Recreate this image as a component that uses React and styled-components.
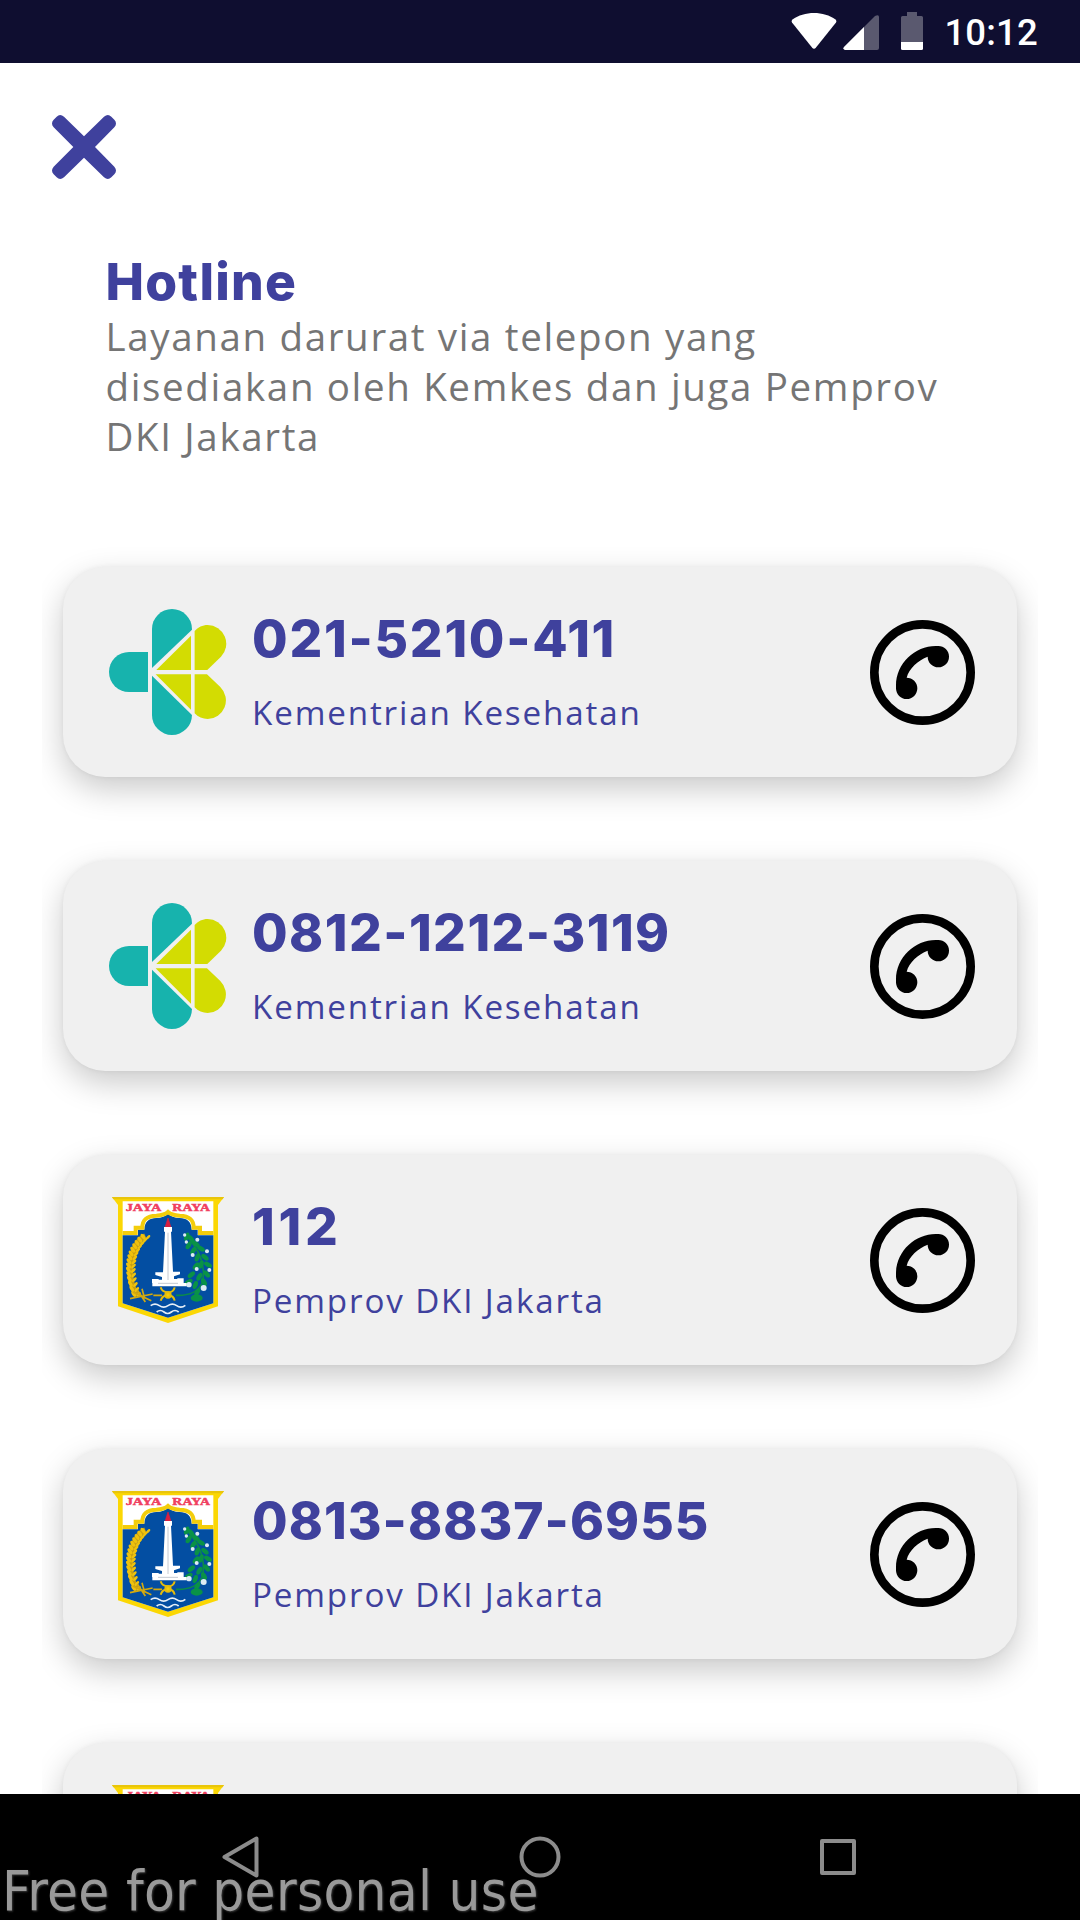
import React from "react";
import styled, { createGlobalStyle } from "styled-components";

const GlobalStyle = createGlobalStyle`
  * { box-sizing: border-box; }
  body { margin: 0; background: #fff; }
`;

const INDIGO = "#3f419d";

const Screen = styled.div`
  position: relative;
  display: flex;
  flex-direction: column;
  width: 1080px;
  height: 1920px;
  overflow: hidden;
  background: #fff;
`;

const StatusBar = styled.header`
  flex: none;
  display: flex;
  justify-content: flex-end;
  height: 63px;
  padding: 12px 42px 0 0;
  background: #0f0e30;
`;

const StatusIcon = styled.svg`
  flex: none;
  width: ${(p) => p.$w}px;
  height: 38px;
  margin-right: ${(p) => p.$gap}px;
`;

const Clock = styled.span`
  font: 500 36.5px/42px Roboto, sans-serif;
  letter-spacing: 0.2px;
  color: #fff;
`;

const Body = styled.main`
  flex: 1;
  min-height: 0;
  overflow: hidden;
  padding: 52px 42px 0;
`;

const CloseButton = styled.button`
  display: block;
  width: 84px;
  height: 64px;
  margin-left: 10px;
  padding: 0;
  border: 0;
  background: none;
  svg { display: block; }
`;

const Intro = styled.section`
  padding: 71.5px 30px 0 63.5px;
`;

const Title = styled.h1`
  margin: 0;
  font: 800 51.5px/60px Inter, sans-serif;
  letter-spacing: 1.2px;
  color: ${INDIGO};
`;

const Description = styled.p`
  margin: 0;
  font: 400 38.5px/50px "Open Sans", sans-serif;
  letter-spacing: 1.65px;
  white-space: pre-line;
  color: #757575;
`;

const List = styled.ul`
  display: flex;
  flex-direction: column;
  gap: 84px;
  height: 1300px;
  margin: 66.5px 0 0;
  padding: 40px 21px;
  list-style: none;
  overflow: hidden;
`;

const Card = styled.li`
  flex: none;
  display: flex;
  align-items: center;
  height: 210px;
  padding: 0 42px;
  border-radius: 42px;
  background: #f0f0f0;
  box-shadow: 0 12px 32px rgba(0, 0, 0, 0.21), 0 0 5px rgba(0, 0, 0, 0.05);
`;

const LogoBox = styled.div`
  flex: none;
  display: flex;
  justify-content: center;
  width: 126px;
  height: 126px;
  margin-right: 21px;
`;

const Contact = styled.div`
  flex: 1;
  display: flex;
  flex-direction: column;
  gap: 24px;
  color: ${INDIGO};
`;

const Phone = styled.strong`
  font: 800 51.5px/58px Inter, sans-serif;
  letter-spacing: ${(p) => p.$track}px;
`;

const Agency = styled.span`
  font: 400 33.2px/44px "Open Sans", sans-serif;
  letter-spacing: 1.85px;
`;

const NavBar = styled.nav`
  flex: none;
  display: flex;
  align-items: center;
  justify-content: center;
  gap: 256px;
  height: 126px;
  background: #000;
`;

const NavIcon = styled.svg`
  width: 42px;
  height: 42px;
  fill: none;
  stroke: #8c8c8c;
  stroke-width: 4;
  stroke-linejoin: round;
`;

const Watermark = styled.div`
  position: absolute;
  left: 2px;
  bottom: -4px;
  font: 400 56px/66px "DejaVu Sans Condensed", "DejaVu Sans", sans-serif;
  font-stretch: condensed;
  letter-spacing: 0.3px;
  white-space: nowrap;
  color: #999;
  text-shadow: 1px 1px 2px rgba(110, 110, 110, 0.5);
`;

const HealthLogo = () => (
  <svg width="117.3" height="126" viewBox="207 207 352 378">
    <g fill="#17b3ad">
      <path d="M324 336H267a60 60 0 0 0 0 120h57z" />
      <path d="M336 384V267a60 60 0 0 1 120 0v2z" />
      <path d="M336 407v118a60 60 0 0 0 120 0v0z" />
    </g>
    <g fill="#d3dc02">
      <path d="M453 287v103H349z" />
      <path d="M347 403h106v106z" />
      <path d="M464 273C474 262 488 255 503 255a56 56 0 0 1 40 95L502 390h-38z" />
      <path d="M464 403h37l40 38a56 56 0 0 1-38 96c-14 0-29-6-39-17z" />
    </g>
  </svg>
);

const GRAINS = Array.from({ length: 15 }, (_, i) => {
  const t = i / 14;
  const a = (1 - t) * (1 - t);
  const b = 2 * t * (1 - t);
  return [a * 166 + b * 96 + t * t * 138, a * 200 + b * 262 + t * t * 372];
});

const LEAVES = [
  [290, 200, 20], [303, 206, -40], [296, 226, 30], [318, 222, -50], [310, 242, 30],
  [333, 236, -60], [322, 262, 20], [345, 262, -50], [333, 284, 20], [354, 284, -60],
  [318, 288, 40], [350, 312, -40], [328, 320, 30], [304, 314, 50], [342, 336, -30],
  [316, 345, 20], [296, 336, 60], [322, 366, 30],
];

const BLOOMS = [
  [284, 195, 5], [289, 216, 5], [322, 209, 6], [351, 244, 6], [308, 255, 6],
  [320, 297, 6], [358, 300, 6], [297, 344, 8], [341, 354, 9],
];

const JakartaLogo = () => (
  <svg width="112" height="126" viewBox="66 81 336 378">
    <path d="M66 81H402L384 105V409L234 459 84 409V105z" fill="#fbd704" />
    <path d="M66 81H402L398 88H70z" fill="#e9c50b" />
    <path d="M98 94H370V400L234 443 98 400z" fill="#fff" />
    <path
      d="M98 196H144V179H163C164 153 178 145 199 144 214 143 227 139 234 131 241 139 254 143 269 144 290 145 304 153 305 179H323V196H370V400L234 443 98 400z"
      fill="#034ea2"
    />
    <path
      d="M98 189H137V173H157C157 146 174 138 199 137 214 136 227 133 234 126 241 133 254 136 269 137 294 138 311 146 311 173H330V189H370"
      fill="none"
      stroke="#f3cd0b"
      strokeWidth="12"
    />
    <g fill="#f0405f" stroke="#f0405f" strokeWidth="1.5" fontFamily="Liberation Serif, serif" fontWeight="700" fontSize="33">
      <text x="107" y="122" textLength="107" lengthAdjust="spacingAndGlyphs">JAYA</text>
      <text x="247" y="122" textLength="113" lengthAdjust="spacingAndGlyphs">RAYA</text>
    </g>
    <path d="M166 198C119 218 105 330 142 376" fill="none" stroke="#c79f13" strokeWidth="17" />
    {GRAINS.map(([x, y], i) => (
      <g key={i} fill="#efc20d">
        <ellipse cx={x - 7} cy={y} rx="10" ry="5" transform={`rotate(55 ${x - 7} ${y})`} />
        <ellipse cx={x + 8} cy={y + 2} rx="9" ry="4" transform={`rotate(-45 ${x + 8} ${y + 2})`} />
      </g>
    ))}
    <path d="M120 386L188 372M128 366L184 392M142 360L166 396M156 356L164 386M190 376H216" stroke="#d3a90f" strokeWidth="5" fill="none" />
    <path d="M290 196C322 236 352 282 336 340 326 362 300 378 258 376" fill="none" stroke="#0b8a4b" strokeWidth="5" />
    {LEAVES.map(([x, y, r], i) => (
      <ellipse key={i} cx={x} cy={y} rx="7" ry="13" fill="#099247" transform={`rotate(${r} ${x} ${y})`} />
    ))}
    <ellipse cx="320" cy="384" rx="18" ry="11" fill="#099247" />
    {BLOOMS.map(([x, y, r], i) => (
      <circle key={i} cx={x} cy={y} r={r} fill="#dcebf3" />
    ))}
    <path d="M234 144l9 28h-18z" fill="#d91f3f" stroke="#d91f3f" strokeWidth="2" />
    <path d="M222 171h24v14h-3l6 120h21v8l-18 6v8h10v-2h19v14h9v10H187v-10h-1v-12h20v2h10v-8l-20-6v-8h23l6-122h-3z" fill="#fff" />
    <path d="M234 188V330M204 340h60" stroke="#c4cad2" strokeWidth="3" />
    <g fill="none" stroke="#e5bd0c" strokeWidth="6">
      <path d="M212 352C218 372 250 372 254 352M212 392C218 370 250 370 254 392" />
      <circle cx="234" cy="375" r="8" fill="#f4cd0b" />
    </g>
    <g fill="none" stroke="#e6eff8" strokeWidth="5">
      <path d="M182 407q13-9 26 0t26 0 26 0 26-1" />
      <path d="M200 426q11-9 22 0t22 0 22 0" />
    </g>
  </svg>
);

const CallIcon = () => (
  <svg width="105" height="105" viewBox="90 240 315 315">
    <circle cx="247.5" cy="397.5" r="144.5" fill="none" stroke="#000" strokeWidth="26" />
    <path d="M168 445V437C168 370 225 318 287 318H295A32 32 0 1 1 263 350C235 360 207 385 200 413A32 32 0 1 1 168 445z" />
  </svg>
);

const HOTLINES = [
  { phone: "021-5210-411", agency: "Kementrian Kesehatan", Logo: HealthLogo, track: 1.75 },
  { phone: "0812-1212-3119", agency: "Kementrian Kesehatan", Logo: HealthLogo, track: 1.45 },
  { phone: "112", agency: "Pemprov DKI Jakarta", Logo: JakartaLogo, track: 3.8 },
  { phone: "0813-8837-6955", agency: "Pemprov DKI Jakarta", Logo: JakartaLogo, track: 1.05 },
  { phone: "", agency: "", Logo: JakartaLogo, track: 0 },
];

export default function App() {
  return (
    <Screen>
      <GlobalStyle />
      <StatusBar>
        <StatusIcon $w={46} $gap={6} viewBox="0 0 46 38">
          <path d="M1.5 7.5C13-1.200 33-1.200 44.500 7.500Q46 9 45 10.500L25 35.500Q23 38 21 35.500L1 10.500Q0 9 1.500 7.500z" fill="#fff" />
        </StatusIcon>
        <StatusIcon $w={36} $gap={22} viewBox="0 0 36 38">
          <path d="M1 35L32 4Q36 2 36 5V36Q36 38 34 38H2Q-.5 37 1 35z" fill="#5a596f" />
          <path d="M1 35L21 15V38H2Q-.5 37 1 35z" fill="#fff" />
        </StatusIcon>
        <StatusIcon $w={22} $gap={21} viewBox="0 0 22 38">
          <path d="M6 0H16V4H20.500Q22 4 22 5.500V30H0V5.500Q0 4 1.500 4H6z" fill="#5a596f" />
          <path d="M0 30H22V36.500Q22 38 20.500 38H1.500Q0 38 0 36.500z" fill="#fff" />
        </StatusIcon>
        <Clock>10:12</Clock>
      </StatusBar>
      <Body>
        <CloseButton aria-label="Tutup">
          <svg width="64" height="64" viewBox="0 0 192 192">
            <path
              d="M14 5Q24-5 36 5L96 64 156 5Q168-5 178 5L187 14Q197 25 187 37L129 96 187 155Q197 167 187 178L178 187Q168 197 156 187L96 128 36 187Q24 197 14 187L5 178Q-5 167 5 155L64 96 5 37Q-5 25 5 14z"
              fill={INDIGO}
            />
          </svg>
        </CloseButton>
        <Intro>
          <Title>Hotline</Title>
          <Description>
            {"Layanan darurat via telepon yang\ndisediakan oleh Kemkes dan juga Pemprov\nDKI Jakarta"}
          </Description>
        </Intro>
        <List>
          {HOTLINES.map(({ phone, agency, Logo, track }, i) => (
            <Card key={i}>
              <LogoBox>
                <Logo />
              </LogoBox>
              <Contact>
                <Phone $track={track}>{phone}</Phone>
                <Agency>{agency}</Agency>
              </Contact>
              <CallIcon />
            </Card>
          ))}
        </List>
      </Body>
      <NavBar>
        <NavIcon viewBox="0 0 42 42">
          <path d="M3.500 21L35.500 2.500V39.500z" />
        </NavIcon>
        <NavIcon viewBox="0 0 42 42">
          <circle cx="21" cy="21" r="18.500" />
        </NavIcon>
        <NavIcon viewBox="0 0 42 42">
          <rect x="5" y="5" width="32" height="32" />
        </NavIcon>
      </NavBar>
      <Watermark>Free for personal use</Watermark>
    </Screen>
  );
}
